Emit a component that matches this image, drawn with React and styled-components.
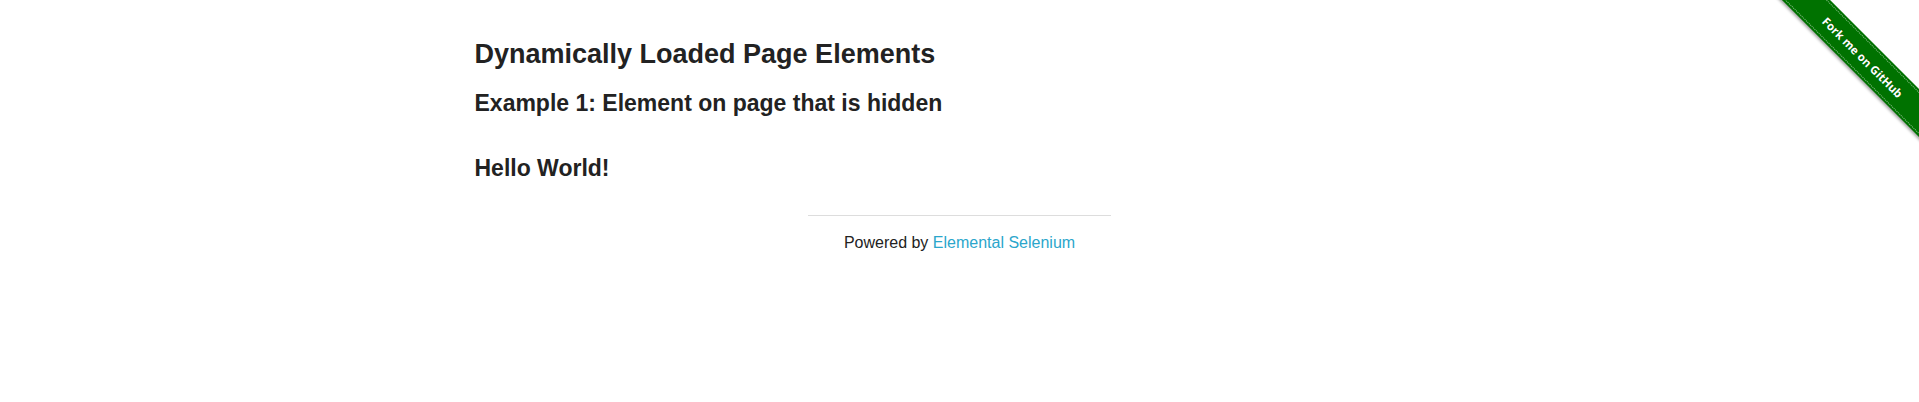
import React from "react";
import styled, { createGlobalStyle } from "styled-components";

const GlobalStyle = createGlobalStyle`
  html, body {
    margin: 0;
    padding: 0;
    background: #fff;
  }
  body {
    font-family: "Liberation Sans", Arial, Helvetica, sans-serif;
    color: #222;
  }
`;

const Page = styled.div`
  position: relative;
  min-height: 402px;
  overflow: hidden;
`;

const Row = styled.div`
  max-width: 1000px;
  margin: 0 auto;
  padding: 36px 15px 0;
  box-sizing: border-box;
`;

const Title = styled.h3`
  margin: 0;
  font-size: 27px;
  line-height: 37.8px;
  font-weight: bold;
  color: #222;
`;

const SubTitle = styled.h4`
  margin: ${(p) => p.$top || 0}px 0 0;
  font-size: 23px;
  line-height: 32.2px;
  font-weight: bold;
  color: #222;
`;

const Footer = styled.div`
  display: flex;
  flex-direction: column;
  align-items: center;
  margin-top: 31px;
`;

const Rule = styled.hr`
  width: 303px;
  margin: 0;
  border: 0;
  border-top: 1px solid #ddd;
  height: 0;
`;

const Powered = styled.div`
  margin-top: 14px;
  font-size: 16px;
  line-height: 25.6px;
  color: #222;
`;

const Link = styled.a`
  color: #2ba6cb;
  text-decoration: none;
`;

const Corner = styled.a`
  position: absolute;
  top: 0;
  right: 0;
  width: 149px;
  height: 149px;
  overflow: hidden;
  text-decoration: none;
`;

const Band = styled.div`
  position: absolute;
  left: -34px;
  top: 40px;
  width: 254px;
  height: 34px;
  transform: rotate(45deg);
  background: #007200;
  box-shadow: 0 2px 3px rgba(0, 0, 0, 0.35);
  display: flex;
  align-items: center;
  justify-content: center;

  &::before,
  &::after {
    content: "";
    position: absolute;
    left: 0;
    right: 0;
    height: 0;
    border-top: 1px dotted rgba(255, 255, 255, 0.55);
  }
  &::before { top: 2px; }
  &::after { bottom: 2px; }
`;

const BandText = styled.span`
  font-family: "Open Sans", "Noto Sans", sans-serif;
  font-weight: 700;
  font-size: 11.5px;
  color: #fff;
  text-shadow: 0 -1px 0 rgba(0, 0, 0, 0.3);
`;

export default function App() {
  return (
    <Page>
      <GlobalStyle />
      <Row>
        <Title>Dynamically Loaded Page Elements</Title>
        <SubTitle $top={13}>Example 1: Element on page that is hidden</SubTitle>
        <SubTitle $top={33}>Hello World!</SubTitle>
        <Footer>
          <Rule />
          <Powered>
            Powered by <Link href="#">Elemental Selenium</Link>
          </Powered>
        </Footer>
      </Row>
      <Corner href="#">
        <Band>
          <BandText>Fork me on GitHub</BandText>
        </Band>
      </Corner>
    </Page>
  );
}
